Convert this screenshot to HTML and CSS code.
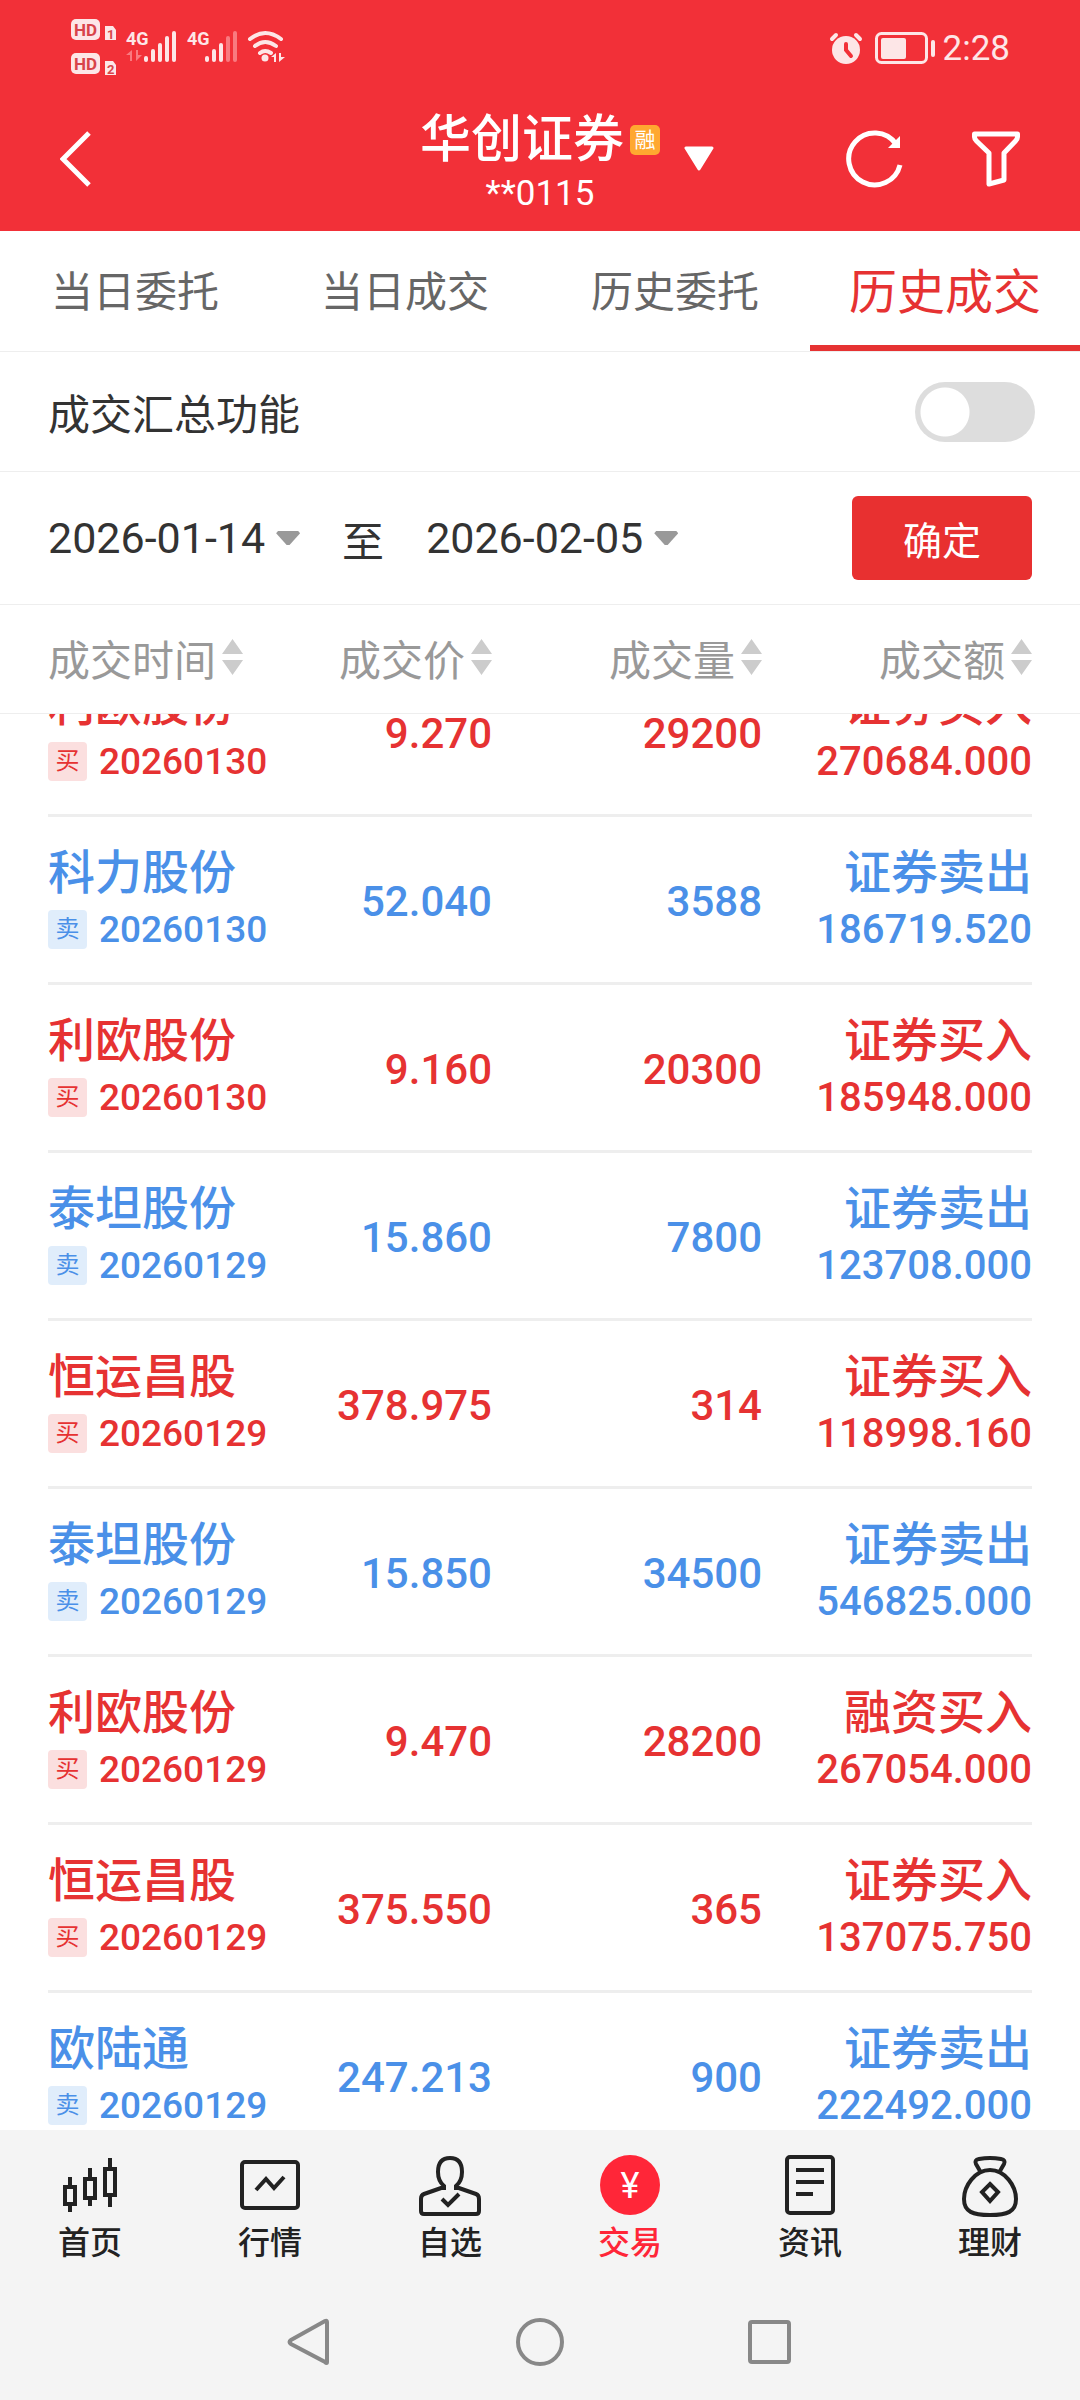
FILE: index.html
```html
<!DOCTYPE html>
<html lang="zh-CN">
    <head>
        <meta charset="utf-8">
        <meta name="viewport" content="width=device-width, initial-scale=1">
        <title>历史成交</title>
        <link rel="stylesheet" href="styles.css">
    </head>
    <body>
        <header class="header">
            <!--    Phone status bar    -->
            <div class="status">
                <svg class="status-left" width="220" height="60" viewBox="68 18 220 60">
                    <g fill="#fde6e7">
                        <rect x="71" y="19" width="29" height="21" rx="5"/>
                        <rect x="71" y="53" width="29" height="21" rx="5"/>
                        <path d="M105 26h8l3 4v10h-11zM105 61h8l3 4v10h-11z"/>
                        <rect x="144" y="56" width="4" height="6" rx="2"/>
                        <rect x="151" y="49" width="4" height="13" rx="2"/>
                        <rect x="158" y="43" width="4" height="19" rx="2"/>
                        <rect x="165" y="36" width="4" height="26" rx="2"/>
                        <rect x="172" y="31" width="4" height="31" rx="2"/>
                        <rect x="205" y="56" width="4" height="6" rx="2"/>
                        <rect x="212" y="49" width="4" height="13" rx="2"/>
                        <rect x="219" y="43" width="4" height="19" rx="2"/>
                        <circle cx="265" cy="58" r="3.5"/>
                        <path d="M276 53v9h-2v-5h-3zM279 53v9l6-5h-4v-4z"/>
                    </g>
                    <g fill="#f97a80">
                        <rect x="226" y="36" width="4" height="26" rx="2"/>
                        <rect x="233" y="31" width="4" height="31" rx="2"/>
                        <path d="M132 50v11h-2v-6h-4zM136 50v11l6-6h-4v-5z"/>
                    </g>
                    <path d="M250 39q15-12 31 0M255 46q10-8 21 0M260 53q5-4 11 0" fill="none" stroke="#fde6e7" stroke-width="4" stroke-linecap="round"/>
                    <text class="hd" x="74" y="36">HD</text>
                    <text class="hd" x="74" y="70">HD</text>
                    <text class="sim" x="107" y="39">1</text>
                    <text class="sim" x="107" y="74">2</text>
                    <text class="net" x="126" y="45">4G</text>
                    <text class="net" x="187" y="45">4G</text>
                </svg>
                <div class="status-right">
                    <svg width="106" height="34" viewBox="828 29 106 34">
                        <circle cx="845" cy="48" r="14" fill="#fde6e7"/>
                        <path d="M831 37l4-4M859 37l-4-4" stroke="#fde6e7" stroke-width="4" stroke-linecap="round"/>
                        <path d="M845 42v6l5 6" fill="none" stroke="#f23038" stroke-width="4" stroke-linecap="round"/>
                        <rect x="875.5" y="31.5" width="50" height="29" rx="5" fill="none" stroke="#fde6e7" stroke-width="3"/>
                        <rect x="880" y="36" width="25" height="21" rx="2" fill="#fde6e7"/>
                        <rect x="930" y="38" width="4" height="17" rx="2" fill="#fde6e7"/>
                    </svg>
                    <span>2:28</span>
                </div>
            </div>

            <!--    Account bar    -->
            <div class="account-bar">
                <button class="icon-button" aria-label="返回">
                    <svg width="32" height="56" viewBox="0 0 32 56"><path d="M29 2L3 28l26 26" fill="none" stroke="#fff" stroke-width="5"/></svg>
                </button>
                <div class="account">
                    <h1>华创证券<span class="margin-tag">融</span></h1>
                    <p>**0115</p>
                </div>
                <div class="actions">
                    <button class="icon-button" aria-label="切换账户">
                        <svg width="30" height="26" viewBox="0 0 30 26"><path d="M2 2h26L15 23z" fill="#fff" stroke="#fff" stroke-width="3" stroke-linejoin="round"/></svg>
                    </button>
                    <button class="icon-button refresh" aria-label="刷新">
                        <svg width="58" height="58" viewBox="0 0 58 58">
                            <path d="M54 35A26 26 0 1 1 50 14" fill="none" stroke="#fff" stroke-width="5"/>
                            <path d="M54 6v12H42z" fill="#fff"/>
                        </svg>
                    </button>
                    <button class="icon-button" aria-label="筛选">
                        <svg width="48" height="56" viewBox="0 0 48 56"><path d="M2.500 3h43v3q0 2-2 4L32 22v27l-15 4V22L4.500 10q-2-2-2-4z" fill="none" stroke="#fff" stroke-width="5" stroke-linejoin="round"/></svg>
                    </button>
                </div>
            </div>
        </header>

        <nav class="tabs">
            <a href="#today-orders">当日委托</a>
            <a href="#today-deals">当日成交</a>
            <a href="#history-orders">历史委托</a>
            <a href="#history-deals" class="active">历史成交</a>
        </nav>

        <div class="summary">
            <label for="summary">成交汇总功能</label>
            <input type="checkbox" id="summary" class="switch">
        </div>

        <form class="dates">
            <button type="button" class="date">2026-01-14<span class="down"></span></button>
            <span class="to">至</span>
            <button type="button" class="date">2026-02-05<span class="down"></span></button>
            <button type="button" class="confirm">确定</button>
        </form>

        <!--    The list scrolls under its own header    -->
        <main class="list" id="list">
            <table>
                <thead>
                    <tr>
                        <th><button>成交时间<span class="sort"></span></button></th>
                        <th><button>成交价<span class="sort"></span></button></th>
                        <th><button>成交量<span class="sort"></span></button></th>
                        <th><button>成交额<span class="sort"></span></button></th>
                    </tr>
                </thead>
                <tbody>
                    <tr class="buy">
                        <td><div class="name">利欧股份</div><div class="day"><span class="side">买</span>20260130</div></td>
                        <td>9.270</td>
                        <td>29200</td>
                        <td><div class="name">证券买入</div><div class="amount">270684.000</div></td>
                    </tr>
                    <tr class="sell">
                        <td><div class="name">科力股份</div><div class="day"><span class="side">卖</span>20260130</div></td>
                        <td>52.040</td>
                        <td>3588</td>
                        <td><div class="name">证券卖出</div><div class="amount">186719.520</div></td>
                    </tr>
                    <tr class="buy">
                        <td><div class="name">利欧股份</div><div class="day"><span class="side">买</span>20260130</div></td>
                        <td>9.160</td>
                        <td>20300</td>
                        <td><div class="name">证券买入</div><div class="amount">185948.000</div></td>
                    </tr>
                    <tr class="sell">
                        <td><div class="name">泰坦股份</div><div class="day"><span class="side">卖</span>20260129</div></td>
                        <td>15.860</td>
                        <td>7800</td>
                        <td><div class="name">证券卖出</div><div class="amount">123708.000</div></td>
                    </tr>
                    <tr class="buy">
                        <td><div class="name">恒运昌股</div><div class="day"><span class="side">买</span>20260129</div></td>
                        <td>378.975</td>
                        <td>314</td>
                        <td><div class="name">证券买入</div><div class="amount">118998.160</div></td>
                    </tr>
                    <tr class="sell">
                        <td><div class="name">泰坦股份</div><div class="day"><span class="side">卖</span>20260129</div></td>
                        <td>15.850</td>
                        <td>34500</td>
                        <td><div class="name">证券卖出</div><div class="amount">546825.000</div></td>
                    </tr>
                    <tr class="buy">
                        <td><div class="name">利欧股份</div><div class="day"><span class="side">买</span>20260129</div></td>
                        <td>9.470</td>
                        <td>28200</td>
                        <td><div class="name">融资买入</div><div class="amount">267054.000</div></td>
                    </tr>
                    <tr class="buy">
                        <td><div class="name">恒运昌股</div><div class="day"><span class="side">买</span>20260129</div></td>
                        <td>375.550</td>
                        <td>365</td>
                        <td><div class="name">证券买入</div><div class="amount">137075.750</div></td>
                    </tr>
                    <tr class="sell">
                        <td><div class="name">欧陆通</div><div class="day"><span class="side">卖</span>20260129</div></td>
                        <td>247.213</td>
                        <td>900</td>
                        <td><div class="name">证券卖出</div><div class="amount">222492.000</div></td>
                    </tr>
                </tbody>
            </table>
        </main>

        <nav class="bottom">
            <a href="#home">
                <svg viewBox="0 0 70 70"><path d="M10 37h10v17H10zM30 29h10v19H30zM50 19h10v26H50zM15 27v10M15 54v8M35 18v11M35 48v8M55 8v11M55 45v12"/></svg>
                首页
            </a>
            <a href="#market">
                <svg viewBox="0 0 70 70"><rect x="7" y="12" width="56" height="46" rx="3"/><path d="M21 40l10-11 8 9 10-11"/></svg>
                行情
            </a>
            <a href="#watchlist">
                <svg viewBox="0 0 70 70"><path d="M29 40v-4q-6-5-6-14 0-14 12-14t12 14q0 9-6 14v4M29 37L9 44q-3 1-3 5v12q0 3 3 3h52q3 0 3-3V49q0-4-3-5l-20-7M27 49l6 6 11-11"/></svg>
                自选
            </a>
            <a href="#trade" class="active">
                <svg viewBox="0 0 70 70"><circle cx="35" cy="35" r="30"/><text x="35" y="48">¥</text></svg>
                交易
            </a>
            <a href="#news">
                <svg viewBox="0 0 70 70"><rect x="12" y="7" width="46" height="56" rx="3"/><path d="M21 20h28M21 32h28M21 44h17"/></svg>
                资讯
            </a>
            <a href="#wealth">
                <svg viewBox="0 0 70 70"><path d="M25 21l-4-7q-2-4 3-5 11-2 22 0 5 1 3 5l-4 7M35 20C20 20 9 36 9 49c0 13 9 16 26 16s26-3 26-16C61 36 50 20 35 20zM35 34l8 8-8 9-8-9z"/></svg>
                理财
            </a>
        </nav>

        <div class="system">
            <button class="icon-button" aria-label="系统返回"><svg viewBox="0 0 48 48"><path d="M42 4v40q0 2-2 0L6 26q-3-2 0-4L40 3q2-1 2 1z"/></svg></button>
            <button class="icon-button" aria-label="主屏幕"><svg viewBox="0 0 48 48"><circle cx="24" cy="24" r="22"/></svg></button>
            <button class="icon-button" aria-label="最近任务"><svg viewBox="0 0 48 48"><rect x="3" y="4" width="39" height="40" rx="2"/></svg></button>
        </div>

        <script>
            // open the list a little way down
            document.getElementById("list").scrollTop = 65;
        </script>
    </body>
</html>
```
FILE: styles.css
```css
* {
    box-sizing: border-box;
}

body {
    margin: 0;
    height: 100vh;
    display: flex;
    flex-direction: column;
    background: #fff;
    color: #333;
    font-family: Roboto, "Noto Sans CJK SC", sans-serif;
    font-size: 42px;
}

a {
    color: inherit;
    text-decoration: none;
}

button {
    padding: 0;
    border: 0;
    background: none;
    color: inherit;
    font: inherit;
    cursor: pointer;
}

.icon-button {
    display: flex;
}

/** Red header **/
.header {
    background: #f23038;
    color: #fff;
}

.status {
    height: 93px;
    padding: 3px 70px 0 68px;
    display: flex;
    align-items: center;
    justify-content: space-between;
}

.status-right {
    display: flex;
    align-items: center;
    gap: 8px;
    color: #fde6e7;
    font-size: 35px;
}

.hd {
    fill: #d8444a;
    font-size: 17px;
    font-weight: 700;
}

.sim {
    fill: #d8444a;
    font-size: 13px;
    font-weight: 700;
}

.net {
    fill: #fde6e7;
    font-family: "Liberation Sans Narrow", Roboto, sans-serif;
    font-size: 18px;
    font-weight: 700;
}

.account-bar {
    height: 138px;
    padding: 0 60px 6px;
    display: grid;
    grid-template-columns: 1fr auto 1fr;
    align-items: center;
}

.account {
    padding-top: 10px;
    text-align: center;
}

.account h1 {
    margin: 0;
    display: flex;
    align-items: center;
    gap: 6px;
    font-size: 51px;
    font-weight: 500;
    line-height: 60px;
}

.margin-tag {
    width: 30px;
    border-radius: 5px;
    background: #ffa830;
    font-size: 21px;
    font-weight: 400;
    line-height: 30px;
}

.account p {
    margin: 0;
    font-size: 35px;
    line-height: 48px;
}

.actions {
    padding-left: 24px;
    display: flex;
    align-items: center;
}

.refresh {
    margin-left: auto;
    margin-right: 68px;
}

/** Tabs **/
.tabs {
    height: 121px;
    display: grid;
    grid-template-columns: repeat(4, 1fr);
    border-bottom: 1px solid #eee;
    color: #666;
    text-align: center;
    line-height: 124px;
}

.tabs .active {
    height: 120px;
    border-bottom: 6px solid #e63232;
    color: #e63232;
    font-size: 48px;
}

/** Summary switch **/
.summary {
    height: 120px;
    padding: 0 45px 0 48px;
    display: flex;
    align-items: center;
    justify-content: space-between;
    border-bottom: 1px solid #eee;
}

.switch {
    appearance: none;
    width: 120px;
    height: 60px;
    margin: 0;
    border-radius: 30px;
    background: radial-gradient(circle at 30px 50%, #fff 24px, #ddd 25px);
}

.switch:checked {
    background: radial-gradient(circle at 90px 50%, #fff 24px, #e63232 25px);
}

/** Date range **/
.dates {
    height: 133px;
    padding: 0 48px;
    display: flex;
    align-items: center;
    border-bottom: 1px solid #eee;
}

.date {
    display: flex;
    align-items: center;
    gap: 11px;
    font-size: 43px;
}

.down {
    width: 24px;
    height: 14px;
    background: #999;
    clip-path: polygon(8% 0, 92% 0, 100% 16%, 56% 100%, 44% 100%, 0 16%);
}

.to {
    margin: 0 42px;
}

.confirm {
    width: 180px;
    height: 84px;
    margin-left: auto;
    border-radius: 6px;
    background: #e83030;
    color: #fff;
    font-size: 39px;
}

/** Deals **/
.list {
    flex: 1;
    min-height: 0;
    overflow-y: auto;
    scrollbar-width: none;
}

table {
    width: 100%;
    table-layout: fixed;
    border-spacing: 0;
}

th {
    position: sticky;
    top: 0;
    height: 109px;
    padding: 0 0 4px;
    border-bottom: 1px solid #eee;
    background: #fff;
    color: #999;
    font-weight: 400;
    text-align: right;
}

th:nth-child(odd) {
    width: 25vw;
}

th:first-child,
td:first-child {
    padding-left: 48px;
    text-align: left;
}

th:last-child,
td:last-child {
    width: calc(25vw + 48px);
    padding-right: 48px;
}

th button {
    display: inline-flex;
    align-items: center;
    gap: 6px;
    vertical-align: middle;
}

.sort {
    width: 21px;
    height: 36px;
    background: #ccc;
    clip-path: polygon(50% 0, 100% 42%, 0 42%, 0 58%, 100% 58%, 50% 100%, 0 58%, 0 42%);
}

tbody tr {
    background: linear-gradient(#eee, #eee) no-repeat center bottom / calc(100% - 96px) 3px;
}

td {
    height: 168px;
    padding: 0;
    font-weight: 500;
    text-align: right;
    white-space: nowrap;
}

.buy {
    color: #e63232;
}

.sell {
    color: #4a90e8;
}

.name {
    font-size: 47px;
    line-height: 57px;
}

.day {
    display: flex;
    align-items: center;
    gap: 12px;
    font-size: 37px;
    line-height: 57px;
}

.amount {
    font-size: 40px;
    line-height: 57px;
}

.side {
    width: 39px;
    border-radius: 4px;
    background: #fbdfdf;
    font-size: 24px;
    font-weight: 400;
    line-height: 39px;
    text-align: center;
}

.sell .side {
    background: #e0edfb;
}

/** Bottom menu **/
.bottom {
    height: 154px;
    padding-top: 20px;
    display: grid;
    grid-template-columns: repeat(6, 1fr);
    background: #f4f4f4;
    color: #222;
    font-size: 32px;
    font-weight: 500;
    line-height: 46px;
}

.bottom a {
    display: flex;
    flex-direction: column;
    align-items: center;
}

.bottom svg {
    width: 70px;
    height: 70px;
    fill: none;
    stroke: #222;
    stroke-width: 4;
}

.bottom .active {
    color: #ff2638;
}

.bottom .active svg {
    fill: #ff2638;
    stroke: none;
}

.bottom text {
    fill: #fff;
    font-size: 36px;
    font-weight: 400;
    text-anchor: middle;
}

/** Phone navigation keys **/
.system {
    height: 116px;
    display: flex;
    align-items: center;
    justify-content: center;
    gap: 183px;
    background: #f4f4f4;
}

.system svg {
    width: 48px;
    height: 48px;
    fill: none;
    stroke: #888;
    stroke-width: 4;
}
```
